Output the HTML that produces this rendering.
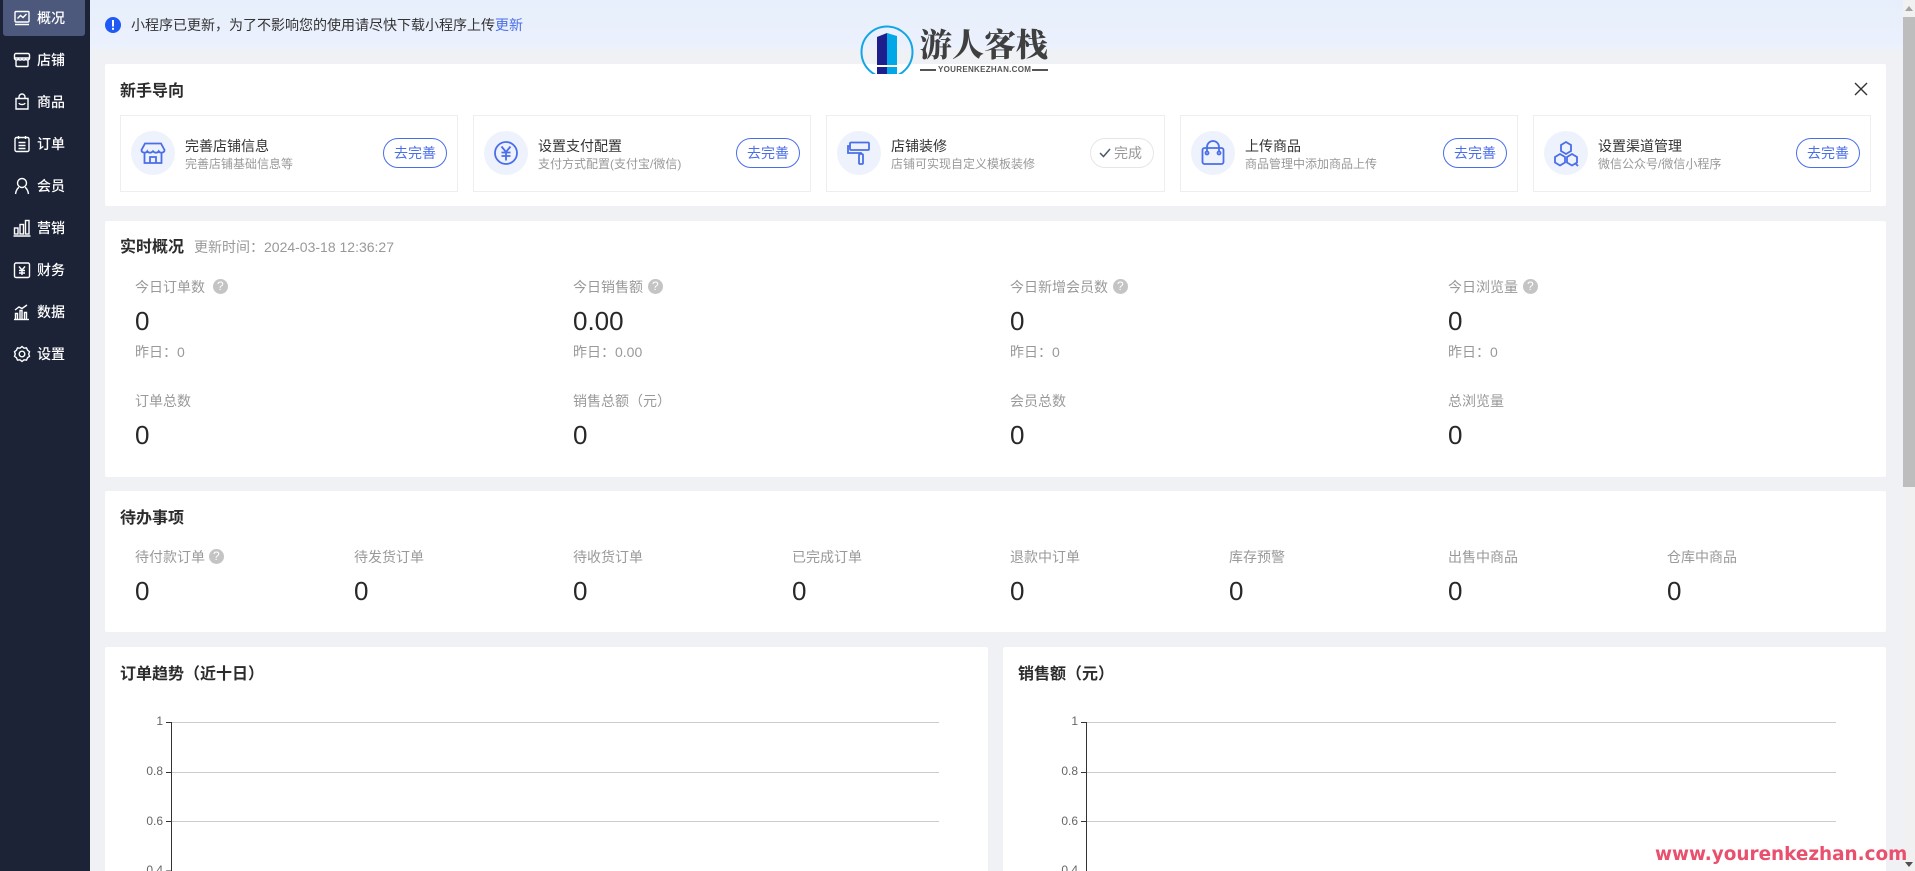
<!DOCTYPE html>
<html lang="zh"><head><meta charset="utf-8"><title>概况</title>
<style>
html,body{margin:0;padding:0;width:1915px;height:871px;overflow:hidden;background:#eff1f4}
body{position:relative;font-family:"Liberation Sans","Noto Sans CJK SC",sans-serif;font-size:14px;color:#333}
.a{position:absolute;white-space:nowrap}
#side{left:0;top:0;width:90px;height:871px;background:#1c2337}
.act{left:3px;top:0;width:82px;height:36px;background:#4c597c;border-radius:0 0 3px 3px}
.ni{position:absolute;left:13px;width:18px;height:18px;fill:none;stroke:#fff;stroke-width:1.4}
.nt{position:absolute;left:37px;color:#fff;font-size:14px;font-weight:500;line-height:20px;white-space:nowrap}
.card{position:absolute;background:#fff;border-radius:2px}
.h{position:absolute;font-size:16px;font-weight:700;line-height:22px;color:#2c2c2c;white-space:nowrap}
.box{position:absolute;top:115px;width:336px;height:75px;border:1px solid #eeeeee;background:#fff}
.ic{position:absolute;left:10px;top:15px;width:44px;height:44px;border-radius:50%;background:#eef2fd}
.ic svg{position:absolute;left:8px;top:8px;width:28px;height:28px;fill:none;stroke:#4a6ee8;stroke-width:1.8}
.t{position:absolute;left:64px;top:20px;font-size:14px;line-height:20px;color:#333;white-space:nowrap}
.s{position:absolute;left:64px;top:39px;font-size:12px;line-height:18px;color:#999;white-space:nowrap}
.b{position:absolute;left:262px;top:22px;width:62px;height:28px;border:1px solid #4a6ee8;border-radius:15px;color:#4a6ee8;text-align:center;font-size:14px;line-height:28px}
.b.d{left:263px;border-color:#e6e6e6;color:#999}
.l{position:absolute;font-size:14px;line-height:20px;color:#999;white-space:nowrap}
.v{position:absolute;font-size:26px;line-height:34px;color:#282828;white-space:nowrap}
.q{display:inline-block;width:15px;height:15px;border-radius:50%;background:#c4c4c4;color:#fff;font-size:12px;line-height:15px;text-align:center;vertical-align:2px}
.y{position:absolute;font-size:12px;line-height:16px;color:#666;text-align:right;width:40px;white-space:nowrap}
</style></head><body>

<div class="a" id="side">
<div class="a act"></div>
<svg class="ni" style="top:9px" viewBox="0 0 18 18"><rect x="2" y="2.500" width="14" height="10.500" rx="1"/><path d="M4.500 9.500l3-3 2.500 2 3.500-3.500M2 15.500h14"/></svg><div class="nt" style="top:8px">概况</div>
<svg class="ni" style="top:51px" viewBox="0 0 18 18"><path d="M3 2.500h12a1.500 1.500 0 0 1 1.500 1.500v3H1.500V4A1.500 1.500 0 0 1 3 2.500zM1.500 7c0 2 2.500 2.500 3.800 1.300 1.200 1 2.200 1.200 3.700 0 1.500 1.200 2.500 1 3.700 0C14 9.500 16.500 9 16.500 7M3 9v5.500a1 1 0 0 0 1 1h10a1 1 0 0 0 1-1V9"/></svg><div class="nt" style="top:50px">店铺</div>
<svg class="ni" style="top:93px" viewBox="0 0 18 18"><path d="M3 5.500h12v10.500H3zM6 5.500V4a3 3 0 0 1 6 0v1.500M6 10c.5 2 5.500 2 6 0"/></svg><div class="nt" style="top:92px">商品</div>
<svg class="ni" style="top:135px" viewBox="0 0 18 18"><rect x="2" y="2.500" width="14" height="14" rx="1.500"/><path d="M5.500 1v3M12.500 1v3M5.500 7.500h7M5.500 10.500h7M5.500 13.500h7"/></svg><div class="nt" style="top:134px">订单</div>
<svg class="ni" style="top:177px" viewBox="0 0 18 18"><circle cx="9" cy="6" r="4.500"/><path d="M2.500 17c.5-4.500 3-6.500 3.500-6.500M15.500 17c-.5-4.500-3-6.500-3.500-6.500"/></svg><div class="nt" style="top:176px">会员</div>
<svg class="ni" style="top:219px" viewBox="0 0 18 18"><rect x="1.500" y="9" width="3.500" height="6"/><rect x="7" y="5.500" width="3.500" height="9.500"/><rect x="12.500" y="1.500" width="3.500" height="13.500"/><path d="M.5 17h17"/></svg><div class="nt" style="top:218px">营销</div>
<svg class="ni" style="top:261px" viewBox="0 0 18 18"><rect x="1.500" y="2" width="15" height="14.500" rx="1.500"/><path d="M6 5.500L9 9l3-3.500M9 9v5M6 9.500h6M6 12h6"/></svg><div class="nt" style="top:260px">财务</div>
<svg class="ni" style="top:303px" viewBox="0 0 18 18"><path d="M2.500 16v-5.500h2V16M7 16V7.500h2V16M11.500 16V9.500h2V16M2 7l4-3 3 1.500L14 2"/><path d="M1 16.500h15"/></svg><div class="nt" style="top:302px">数据</div>
<svg class="ni" style="top:345px" viewBox="0 0 18 18"><path d="M9 1.500l2 1.700 2.500-.3 1 2.300 2 1.500-.8 2.300.8 2.300-2 1.500-1 2.300-2.500-.3-2 1.700-2-1.700-2.500.3-1-2.300-2-1.500.8-2.300L1.500 6.700l2-1.500 1-2.300 2.500.3z"/><circle cx="9" cy="9" r="2.800"/></svg><div class="nt" style="top:344px">设置</div>
</div>

<div class="a" style="left:90px;top:0;width:1813px;height:49px;background:linear-gradient(#e7effc,#ebf1fd)"></div>
<svg class="a" style="left:105px;top:17px" width="16" height="16" viewBox="0 0 16 16"><circle cx="8" cy="8" r="8" fill="#2159f5"/><rect x="7" y="3" width="2" height="6.500" fill="#fff"/><rect x="7" y="10.800" width="2" height="2" fill="#fff"/></svg>
<div class="a" style="left:131px;top:15px;font-size:14px;line-height:20px;color:#333">小程序已更新，为了不影响您的使用请尽快下载小程序上传<span style="color:#4a6ee8">更新</span></div>

<div class="card" style="left:105px;top:64px;width:1781px;height:142px"></div>
<div class="h" style="left:120px;top:81px">新手导向</div>
<svg class="a" style="left:1853px;top:81px" width="16" height="16" viewBox="0 0 16 16"><path d="M2 2l12 12M14 2L2 14" stroke="#333" stroke-width="1.400" fill="none"/></svg>

<div class="box" style="left:120px">
 <div class="ic"><svg viewBox="0 0 28 28"><path d="M6 4.500h16l3.500 6.500c0 3-4.500 3.500-5.800 1.200-1.200 2-4 2-5.700 0-1.700 2-4.500 2-5.700 0C7 14.500 2.500 14 2.500 11zM5.500 14v10h17V14M11 24v-6h6v6"/></svg></div>
 <div class="t">完善店铺信息</div><div class="s">完善店铺基础信息等</div><div class="b">去完善</div>
</div>
<div class="box" style="left:473px">
 <div class="ic"><svg viewBox="0 0 28 28"><circle cx="14" cy="14" r="11"/><path d="M9.500 7.500L14 13l4.500-5.500M14 13v8.500M9.500 13.500h9M9.500 17h9"/></svg></div>
 <div class="t">设置支付配置</div><div class="s">支付方式配置(支付宝/微信)</div><div class="b">去完善</div>
</div>
<div class="box" style="left:826px;width:337px">
 <div class="ic"><svg viewBox="0 0 28 28"><rect x="5" y="3.500" width="19" height="7.500" rx="1"/><path d="M5 7H3v7h13v1"/><rect x="14" y="15" width="4" height="10" rx="1"/></svg></div>
 <div class="t">店铺装修</div><div class="s">店铺可实现自定义模板装修</div><div class="b d"><svg style="position:absolute;left:8px;top:9px" width="12" height="10" viewBox="0 0 12 10"><path d="M1 5l3.500 3.500L11 1" fill="none" stroke="#4a5a6a" stroke-width="1.500"/></svg><span style="position:absolute;left:23px;top:0">完成</span></div>
</div>
<div class="box" style="left:1180px">
 <div class="ic"><svg viewBox="0 0 28 28"><rect x="3.500" y="9" width="21" height="16" rx="2"/><path d="M8 12V8a6 6 0 0 1 12 0v4"/><circle cx="8" cy="14" r="1.500"/><circle cx="20" cy="14" r="1.500"/></svg></div>
 <div class="t">上传商品</div><div class="s">商品管理中添加商品上传</div><div class="b">去完善</div>
</div>
<div class="box" style="left:1533px">
 <div class="ic"><svg viewBox="0 0 28 28"><path d="M14 3l5 3v6l-5 3-5-3V6zM8 15l5 3v5.500L8 26.500 3 23.500V18zM20 15l5 3v5.500l-5 3-5-3V18zM23 24l3 3"/></svg></div>
 <div class="t">设置渠道管理</div><div class="s">微信公众号/微信小程序</div><div class="b">去完善</div>
</div>

<div class="card" style="left:105px;top:221px;width:1781px;height:256px"></div>
<div class="h" style="left:120px;top:237px">实时概况</div>
<div class="l" style="left:194px;top:237px">更新时间：2024-03-18 12:36:27</div>

<div class="l" style="left:135px;top:277px">今日订单数 <span class="q" style="margin-left:4px">?</span></div>
<div class="l" style="left:573px;top:277px">今日销售额 <span class="q" style="margin-left:1px">?</span></div>
<div class="l" style="left:1010px;top:277px">今日新增会员数 <span class="q" style="margin-left:1px">?</span></div>
<div class="l" style="left:1448px;top:277px">今日浏览量 <span class="q" style="margin-left:1px">?</span></div>
<div class="v" style="left:135px;top:304px">0</div><div class="v" style="left:573px;top:304px">0.00</div><div class="v" style="left:1010px;top:304px">0</div><div class="v" style="left:1448px;top:304px">0</div>
<div class="l" style="left:135px;top:342px">昨日：0</div><div class="l" style="left:573px;top:342px">昨日：0.00</div><div class="l" style="left:1010px;top:342px">昨日：0</div><div class="l" style="left:1448px;top:342px">昨日：0</div>
<div class="l" style="left:135px;top:391px">订单总数</div><div class="l" style="left:573px;top:391px">销售总额（元）</div><div class="l" style="left:1010px;top:391px">会员总数</div><div class="l" style="left:1448px;top:391px">总浏览量</div>
<div class="v" style="left:135px;top:418px">0</div><div class="v" style="left:573px;top:418px">0</div><div class="v" style="left:1010px;top:418px">0</div><div class="v" style="left:1448px;top:418px">0</div>

<div class="card" style="left:105px;top:491px;width:1781px;height:141px"></div>
<div class="h" style="left:120px;top:508px">待办事项</div>
<div class="l" style="left:135px;top:547px">待付款订单 <span class="q">?</span></div>
<div class="l" style="left:354px;top:547px">待发货订单</div>
<div class="l" style="left:573px;top:547px">待收货订单</div>
<div class="l" style="left:792px;top:547px">已完成订单</div>
<div class="l" style="left:1010px;top:547px">退款中订单</div>
<div class="l" style="left:1229px;top:547px">库存预警</div>
<div class="l" style="left:1448px;top:547px">出售中商品</div>
<div class="l" style="left:1667px;top:547px">仓库中商品</div>
<div class="v" style="left:135px;top:574px">0</div><div class="v" style="left:354px;top:574px">0</div><div class="v" style="left:573px;top:574px">0</div><div class="v" style="left:792px;top:574px">0</div><div class="v" style="left:1010px;top:574px">0</div><div class="v" style="left:1229px;top:574px">0</div><div class="v" style="left:1448px;top:574px">0</div><div class="v" style="left:1667px;top:574px">0</div>

<div class="card" style="left:105px;top:647px;width:883px;height:230px"></div>
<div class="card" style="left:1003px;top:647px;width:883px;height:230px"></div>
<div class="h" style="left:120px;top:664px">订单趋势（近十日）</div>
<div class="h" style="left:1018px;top:664px">销售额（元）</div>

<svg class="a" style="left:0;top:0" width="1915" height="871" viewBox="0 0 1915 871" fill="none">
<path d="M171 722.500H939M171 772.500H939M171 821.500H939M1086 722.500H1836M1086 772.500H1836M1086 821.500H1836" stroke="#cccccc"/>
<path d="M171.500 722V871M166 722.500H171M166 772.500H171M166 821.500H171M166 871H171M1086.500 722V871M1081 722.500H1086M1081 772.500H1086M1081 821.500H1086" stroke="#333"/>
</svg>
<div class="y" style="left:123px;top:713px">1</div><div class="y" style="left:123px;top:763px">0.8</div><div class="y" style="left:123px;top:813px">0.6</div><div class="y" style="left:123px;top:862px">0.4</div>
<div class="y" style="left:1038px;top:713px">1</div><div class="y" style="left:1038px;top:763px">0.8</div><div class="y" style="left:1038px;top:813px">0.6</div><div class="y" style="left:1038px;top:862px">0.4</div>

<div class="a" style="left:1903px;top:0;width:12px;height:871px;background:#f1f1f1"></div>
<div class="a" style="left:1903px;top:17px;width:12px;height:470px;background:#bdbdbd"></div>
<svg class="a" style="left:1903px;top:0" width="12" height="871" viewBox="0 0 12 871"><path d="M6 6l4 5H2z" fill="#a3a3a3"/><path d="M2 862h8l-4 5z" fill="#505050"/></svg>

<svg class="a" style="left:858px;top:22px" width="58" height="52" viewBox="0 0 58 52"><circle cx="29" cy="30" r="25.500" fill="none" stroke="#12a5e8" stroke-width="2"/><path d="M19 15l10-4v41H19z" fill="#1c1f8c"/><path d="M29 11l10 3v38H29z" fill="#00a8e8"/><rect x="19" y="43" width="20" height="2" fill="#fff"/></svg>
<div class="a" style="left:920px;top:22px;font-family:'Liberation Serif','Noto Serif CJK SC',serif;font-size:32px;font-weight:900;line-height:46px;color:#3f3f3f">游人客栈</div>
<div class="a" style="left:920px;top:69px;width:16px;height:2px;background:#555"></div>
<div class="a" style="left:1032px;top:69px;width:16px;height:2px;background:#555"></div>
<div class="a" style="left:938px;top:65px;width:92px;text-align:center;font-size:8px;font-weight:700;line-height:10px;color:#555;letter-spacing:.3px">YOURENKEZHAN.COM</div>

<div class="a" style="left:1655px;top:843px;font-family:'DejaVu Sans',sans-serif;font-weight:700;font-size:18.4px;line-height:24px;color:#e8506e">www.yourenkezhan.com</div>
</body></html>
